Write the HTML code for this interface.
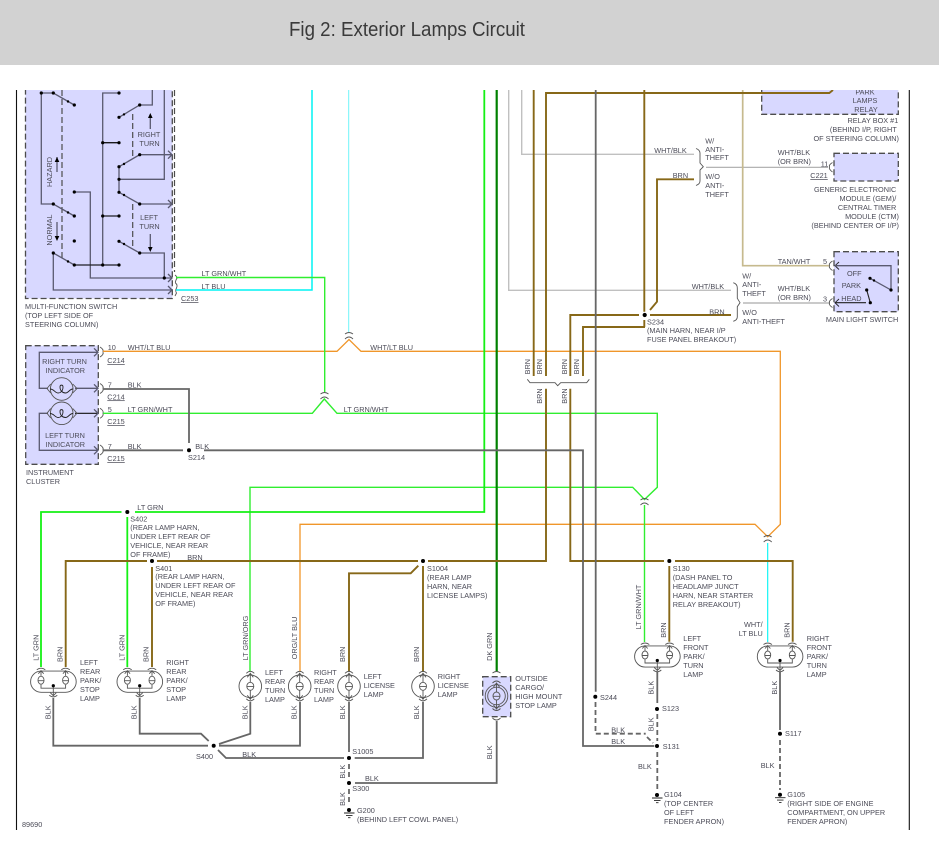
<!DOCTYPE html>
<html><head><meta charset="utf-8"><title>Fig 2: Exterior Lamps Circuit</title>
<style>
html,body{margin:0;padding:0;background:#fff;width:939px;height:854px;overflow:hidden}
svg{position:absolute;left:0;top:0;display:block}
text{font-family:"Liberation Sans",sans-serif;font-size:7.3px;fill:#4c4c58}
.t{font-size:20px;fill:#3a3a3a}
.e{text-anchor:end}.m{text-anchor:middle}.u{text-decoration:underline}
path,line,circle,rect,ellipse{fill:none}
.lg{stroke:#30ee30;stroke-width:1.4}
.bg{stroke:#14f014;stroke-width:1.8}
.dg{stroke:#008000;stroke-width:2.2}
.cy{stroke:#00f4f4;stroke-width:1.5}
.cl{stroke:#70f4f8;stroke-width:1}
.or{stroke:#f0962a;stroke-width:1.3}
.br{stroke:#876818;stroke-width:1.9}
.k{stroke:#666;stroke-width:1.8}
.lgy{stroke:#c0c0c0;stroke-width:1.4}
.gy{stroke:#aaa;stroke-width:1.2}
.tan{stroke:#c6ba8e;stroke-width:1.7}
.d{stroke-dasharray:5 3}
.sw{stroke:#5a5a70;stroke-width:1.3}
.box{fill:#d8d8ff;stroke:#4c4c4c;stroke-width:1.3;stroke-dasharray:6 3}
.dl{stroke:#4c4c4c;stroke-width:1.2;stroke-dasharray:6 3}
.s{stroke:#555;stroke-width:.9}
.dot,.dot circle,.dot path{fill:#000;stroke:none}
</style></head><body>
<svg xmlns="http://www.w3.org/2000/svg" width="939" height="854" viewBox="0 0 939 854">
<defs>
<g id="rl" class="s">
<circle r="11.3"/>
<path d="M-4,-13 Q0,-17 4,-13M-3,-9L0,-13L3,-9M0,-13V-4M-3.4,0.3H3.4M0,4V13M-3,9L0,13L3,9M-4,12.5Q0,16.5 4,12.5"/>
<ellipse rx="3.5" ry="4"/>
</g>
<g id="cp" class="s">
<rect x="-22.7" y="-10.6" width="45.6" height="21.2" rx="10.6"/>
<path d="M-16.5,-12Q-12.3,-15 -8,-12M8,-12Q12.3,-15 16.5,-12M-15,-8L-12.3,-11L-9.6,-8M9.6,-8L12.3,-11L15,-8M-12.3,-11V-6M12.3,-11V-6M-15,-1H-9.5M9.5,-1H15M-12.3,3V6.5H12.3V3M0,4V14M-3,11L0,14L3,11M-4,13.5Q0,17 4,13.5"/>
<ellipse cx="-12.3" cy="-1.5" rx="3" ry="4"/><ellipse cx="12.3" cy="-1.5" rx="3" ry="4"/>
<circle class="dot" cy="4" r="1.6"/>
</g>
<path id="ar" class="sw" d="M-4,-4L0,0L-4,4"/>
<path id="cn" class="s" d="M-4,-2Q0,-5 4,-2M-4,3Q0,-1 4,3" transform="translate(0,1)"/>
<path id="rb" class="s" d="M0,-5Q4,-2.5 3,0Q4,2.5 0,5"/>
<g id="gnd" class="s"><path d="M-5,3H5.5M-3,5.4H3.5M-1,7.7H1.5" style="stroke:#222"/><circle class="dot" r="2"/></g>
</defs>

<!-- outer frame -->
<path d="M16.5,90V830M909.3,90V830" stroke="#111" stroke-width="1.1"/>

<!-- boxes -->
<rect class="box" x="25.5" y="85" width="146.8" height="213.5"/>
<rect class="box" x="761.7" y="85" width="136.6" height="29.3"/>
<rect class="box" x="834" y="153.3" width="64.3" height="27.7"/>
<rect class="box" x="834" y="251.7" width="64.3" height="60"/>
<rect class="box" x="25.7" y="345.7" width="72.6" height="118.6"/>
<rect class="box" x="482.7" y="676.7" width="28" height="40"/>
<path class="dl" d="M174.5,90V272M62,90V258M132.7,114V156M132.7,204V247"/>

<!-- switch wiring -->
<g class="sw">
<path d="M41.3,93V204H53.3L74.3,216M41.3,93H53.3L74.3,105"/>
<path d="M74.3,192H90.3V278H172M53.3,253L74.3,265H119M53.3,253V290H172"/>
<path d="M119,93H102.7V265M102.7,142.7H119M102.7,216H119" />
<path d="M119,117.3L139.7,105H152.3V90M119,166.7L139.7,154.7H172M119,166.7V192.3L139.7,204H172M119,179.3H164.3V90M119,241.3L139.7,253H164.3V278"/>
<path d="M150.3,129V118M150.3,234V247M57,172V157M57,222V236"/>
</g>
<path d="M102.7,142.7H119M102.7,216H119M74.3,265H119" stroke="#111" stroke-width="1.1"/>
<g class="dot">
<circle cx="41.3" cy="93" r="1.6"/><circle cx="53.3" cy="93" r="1.6"/><circle cx="74.3" cy="105" r="1.6"/><circle cx="53.3" cy="204" r="1.6"/><circle cx="74.3" cy="216" r="1.6"/><circle cx="74.3" cy="192" r="1.6"/><circle cx="74.3" cy="241" r="1.6"/><circle cx="53.3" cy="253" r="1.6"/><circle cx="74.3" cy="265" r="1.6"/><circle cx="102.7" cy="265" r="1.6"/><circle cx="119" cy="265" r="1.6"/><circle cx="119" cy="93" r="1.6"/><circle cx="102.7" cy="142.7" r="1.6"/><circle cx="119" cy="142.7" r="1.6"/><circle cx="102.7" cy="216" r="1.6"/><circle cx="119" cy="216" r="1.6"/><circle cx="119" cy="117.3" r="1.6"/><circle cx="139.7" cy="105" r="1.6"/><circle cx="119" cy="166.7" r="1.6"/><circle cx="139.7" cy="154.7" r="1.6"/><circle cx="119" cy="179.3" r="1.6"/><circle cx="119" cy="192.3" r="1.6"/><circle cx="139.7" cy="204" r="1.6"/><circle cx="119" cy="241.3" r="1.6"/><circle cx="139.7" cy="253" r="1.6"/><circle cx="164.3" cy="278" r="1.6"/>
<path d="M150.3,113l-2.3,5h4.6zM150.3,252l-2.3,-5h4.6zM57,157l-2.3,5h4.6zM57,241l-2.3,-5h4.6z"/>
<circle cx="124" cy="114.4" r="1.2"/><circle cx="124" cy="164" r="1.2"/><circle cx="124" cy="195" r="1.2"/><circle cx="124" cy="244" r="1.2"/><circle cx="68" cy="101.5" r="1.2"/><circle cx="68" cy="212.5" r="1.2"/><circle cx="68" cy="261.5" r="1.2"/>
</g>
<use href="#ar" x="172" y="154.7"/><use href="#ar" x="172" y="204"/><use href="#ar" x="172" y="278"/><use href="#ar" x="172" y="290"/>
<path class="s" d="M175,275Q178,277.5 176.5,279Q175,282 175.5,283Q178,285 176.5,288Q175,291 176.5,293L175,296"/>

<!-- instrument cluster wiring -->
<path class="sw" d="M97,352.3H39.3V388.3H48M75,388.3H97M48,413.3H39.3V450.3H97"/>
<path d="M75,413.3H97" stroke="#111" stroke-width="1.1"/>
<g class="s">
<circle cx="61.7" cy="389" r="11.3"/><circle cx="61.7" cy="413.3" r="11.3"/>
<path d="M50.7,384L47,388.5L50.7,393M72.7,384L77,388.5L72.7,393M50.7,408.5L47,413.3L50.7,418M72.7,408.5L77,413.3L72.7,418"/>
<path d="M50,389C54,389 55,393 58,393C60.5,393 63,391 63,387C63,384.5 60,384.5 60,387C60,391 63,393 65.5,393C68.5,393 69.5,389 73,389" style="stroke:#222"/>
<path d="M50,413.5C54,413.5 55,417.5 58,417.5C60.5,417.5 63,415.5 63,411.5C63,409 60,409 60,411.5C60,415.5 63,417.5 65.5,417.5C68.5,417.5 69.5,413.5 73,413.5" style="stroke:#222"/>
</g>
<use href="#ar" x="98" y="352.3"/><use href="#ar" x="98" y="388.3"/><use href="#ar" x="98" y="413.3"/><use href="#ar" x="98" y="450.3"/>
<use href="#rb" x="100" y="352"/><use href="#rb" x="100" y="388.5"/><use href="#rb" x="100" y="413.3"/><use href="#rb" x="100" y="450"/>

<!-- light greys / tan -->
<path class="lgy" d="M521.7,90V154.3H694M508.7,90V290.3H731"/>
<path class="gy" d="M706,167.3H828M743,303H829"/>
<path class="tan" d="M742.7,90V265.7H829"/>

<!-- cyan -->
<path class="cy" d="M312,90V290H176"/>
<path class="cl" d="M348.7,90V332"/>
<path class="cy" style="stroke-width:1.1" d="M767.7,543V642"/>

<!-- orange -->
<path class="or" d="M103,351.3H337L349,339.5L361,351.3H780.3V524.3L767.7,536.7L755,524.3H300V671.7"/>

<!-- light green -->
<path class="lg" d="M176,277.5H324.7V392"/>
<path class="lg" d="M103,413.3H312.3L324.3,399L337,413.3H657.3V487.3L644.5,499.5L632.7,487.3H250V671.7"/>
<path class="lg" d="M644.5,505V642"/>
<path class="bg" d="M484.3,90V512H135M121.5,512H41V667M127.3,517V667"/>
<path class="dg" d="M496.7,90V671.7"/>

<!-- browns -->
<g class="br">
<path d="M533.7,90V376M546,376V93H829.3L833,90"/>
<path d="M644.3,90V311.7M570.3,376V315H639M583,376V327H645M644.3,320V327M650,315H731M650,310L657,301.7V179.3H694"/>
<path d="M546,388.7V561H428M418,561H157M147,561H65.7V667M152,567V667M423,566V672M418.3,565.7L410.7,573.3H349V671.7"/>
<path d="M570.3,388.7V561H664M675,561H792.7V641.7M669.3,566V641.7"/>
</g>

<!-- blacks -->
<g class="k">
<path d="M595.7,90V691.7"/>
<path d="M103,389H189V443M103,450.3H183M204,450.3H583V746H654.3"/>
<path class="d" d="M595.5,702V733.7H645.7M647,737L653,743"/>
<path d="M53.3,698V745.7H208M139.7,698V733.7H201L208.7,741M219,744L250.3,733.7V701.7M219,745.7H300V701.7M218,750L226,758H344M354.7,758H423V701.7M349,701.7V752"/>
<path class="d" d="M349,764V778M349,789V804"/>
<path d="M355,783H496.7V721"/>
<path d="M657.3,671.7V703M780,671.7V730"/>
<path class="d" d="M657.3,714V741M657.3,752V790M780,740V790"/>
</g>

<!-- crossing connectors -->
<use href="#cn" x="349" y="335"/><use href="#cn" x="324.5" y="395"/><use href="#cn" x="644.5" y="501"/><use href="#cn" x="767.7" y="538"/>

<!-- lamps -->
<use href="#cp" x="53.3" y="681.7"/><use href="#cp" x="139.7" y="681.7"/>
<use href="#cp" x="657.3" y="656.5"/><use href="#cp" x="780" y="656.5"/>
<use href="#rl" x="250.3" y="686.3"/><use href="#rl" x="299.7" y="686.3"/><use href="#rl" x="349" y="686.3"/><use href="#rl" x="423" y="686.3"/>
<use href="#rl" x="496.5" y="696"/>
<circle class="s" cx="496.5" cy="696" r="8.8"/>
<path class="s" d="M492.5,673Q496.5,670 500.5,673M492.5,718Q496.5,722 500.5,718"/>

<!-- splice dots -->
<g class="dot">
<circle cx="127.3" cy="512" r="2"/><circle cx="152" cy="561" r="2"/><circle cx="423" cy="561" r="2"/><circle cx="669.3" cy="561" r="2"/><circle cx="644.7" cy="315" r="2.1"/><circle cx="189" cy="450.3" r="2"/><circle cx="213.7" cy="745.7" r="2"/><circle cx="349" cy="758" r="2"/><circle cx="349" cy="783" r="2"/><circle cx="595.3" cy="696.7" r="2"/><circle cx="657" cy="709" r="2"/><circle cx="657" cy="746" r="2"/><circle cx="780" cy="733.7" r="2"/>
</g>
<use href="#gnd" x="349" y="810"/><use href="#gnd" x="657" y="795"/><use href="#gnd" x="780" y="794.7"/>

<!-- braces -->
<path class="s" d="M527.3,379.3L530,382.7H555L557.7,385.7L560.7,382.7H586.7L589.3,379.3"/>
<path class="s" d="M696,148.5Q700,150 700,153V163L703.3,166.7L700,170V181Q700,184 696,185.5"/>
<path class="s" d="M733.3,282.7Q737.3,284 737.3,288V298.3L740,302.7L737.3,306.7V317Q737.3,320 733.3,321.3"/>
<!-- right connectors -->
<path class="s" d="M832.5,162.5Q828.5,165 829.5,167Q828.5,169 832.5,172"/>
<path class="s" d="M832.5,261Q828.5,263.5 829.5,265.7Q828.5,268 832.5,270.5M832.5,298.5Q828.5,301 829.5,303Q828.5,305 832.5,307.5"/>
<path class="s" d="M839,262L835,265.7L839,269.5M839,299L835,302.7L839,306.5" style="stroke:#222"/>
<!-- main light switch -->
<path class="sw" d="M835,265.7H891V290L870,278.3"/>
<path d="M866.7,290L870.3,302.7M835,302.7H866" stroke="#222" stroke-width="1.1"/>
<g class="dot"><circle cx="891" cy="290" r="1.6"/><circle cx="870" cy="278.3" r="1.6"/><circle cx="866.7" cy="290" r="1.6"/><circle cx="870.3" cy="302.7" r="1.6"/><circle cx="874" cy="280.5" r="1.2"/></g>

<!-- cover above diagram -->
<text class="m" x="808" y="90">BRN</text>
<text class="m" x="865" y="94.3">PARK</text>
<rect x="0" y="65" width="939" height="25" style="fill:#fff"/>
<rect x="0" y="0" width="939" height="65" style="fill:#d2d2d2"/>
<text class="t" x="289" y="36" textLength="236" lengthAdjust="spacingAndGlyphs">Fig 2: Exterior Lamps Circuit</text>

<!-- labels: multifunction -->
<text class="m" x="149" y="137">RIGHT</text><text class="m" x="149.5" y="146">TURN</text>
<text class="m" x="149" y="220">LEFT</text><text class="m" x="149.5" y="229">TURN</text>
<text transform="translate(52,172) rotate(-90)" class="m">HAZARD</text>
<text transform="translate(52,230) rotate(-90)" class="m">NORMAL</text>
<text x="25" y="309">MULTI-FUNCTION SWITCH</text><text x="25" y="318">(TOP LEFT SIDE OF</text><text x="25" y="327">STEERING COLUMN)</text>
<text x="201.5" y="276">LT GRN/WHT</text><text x="201.5" y="289">LT BLU</text><text class="u" x="181" y="301">C253</text>

<!-- upper right -->
<text class="m" x="865" y="103">LAMPS</text><text class="m" x="866" y="112">RELAY</text>
<text class="e" x="898.3" y="123">RELAY BOX #1</text><text class="e" x="896.7" y="132">(BEHIND I/P, RIGHT</text><text class="e" x="899" y="141">OF STEERING COLUMN)</text>
<text x="705.3" y="143.3">W/</text><text x="705.3" y="152">ANTI-</text><text x="705.3" y="160">THEFT</text>
<text x="654.3" y="153">WHT/BLK</text><text x="672.7" y="178">BRN</text>
<text x="705.3" y="179">W/O</text><text x="705.3" y="188">ANTI-</text><text x="705.3" y="197">THEFT</text>
<text x="777.7" y="155">WHT/BLK</text><text x="777.7" y="164">(OR BRN)</text>
<text x="820.7" y="166.3">11</text><text class="u" x="810.3" y="178">C221</text>
<text class="e" x="896.3" y="192">GENERIC ELECTRONIC</text><text class="e" x="896.3" y="201">MODULE (GEM)/</text><text class="e" x="896.3" y="210">CENTRAL TIMER</text><text class="e" x="899" y="219">MODULE (CTM)</text><text class="e" x="899" y="228">(BEHIND CENTER OF I/P)</text>
<text x="777.7" y="264">TAN/WHT</text><text x="823" y="264">5</text>
<text x="847" y="276">OFF</text><text x="841.7" y="288">PARK</text><text x="841.3" y="301">HEAD</text><text x="823" y="301.3">3</text>
<text x="777.7" y="291">WHT/BLK</text><text x="777.7" y="300">(OR BRN)</text>
<text x="742.3" y="278.3">W/</text><text x="742.3" y="287">ANTI-</text><text x="742.3" y="296">THEFT</text><text x="742.3" y="315">W/O</text><text x="742.3" y="324">ANTI-THEFT</text>
<text x="691.7" y="289">WHT/BLK</text><text x="709.3" y="314.3">BRN</text>
<text x="647" y="324.3">S234</text><text x="647" y="333">(MAIN HARN, NEAR I/P</text><text x="647" y="342">FUSE PANEL BREAKOUT)</text>
<text class="e" x="898.3" y="322">MAIN LIGHT SWITCH</text>
<text class="m" transform="translate(530,366.7) rotate(-90)">BRN</text>
<text class="m" transform="translate(542,366.7) rotate(-90)">BRN</text>
<text class="m" transform="translate(567,366.7) rotate(-90)">BRN</text>
<text class="m" transform="translate(579,366.7) rotate(-90)">BRN</text>
<text class="m" transform="translate(542,396) rotate(-90)">BRN</text>
<text class="m" transform="translate(567,396) rotate(-90)">BRN</text>

<!-- cluster labels -->
<text x="107.7" y="350">10</text><text x="127.7" y="350">WHT/LT BLU</text><text x="370.3" y="350">WHT/LT BLU</text><text class="u" x="107.3" y="363">C214</text>
<text x="107.7" y="387.3">7</text><text x="127.7" y="387.3">BLK</text><text class="u" x="107.3" y="399.3">C214</text>
<text x="107.7" y="412">5</text><text x="127.7" y="412">LT GRN/WHT</text><text x="343.7" y="412">LT GRN/WHT</text><text class="u" x="107.3" y="424">C215</text>
<text x="107.7" y="449">7</text><text x="127.7" y="449">BLK</text><text class="u" x="107.3" y="461">C215</text>
<text x="195.3" y="449">BLK</text><text x="188" y="460">S214</text>
<text class="m" x="64.5" y="364">RIGHT TURN</text><text class="m" x="65.3" y="373">INDICATOR</text><text class="m" x="65" y="438">LEFT TURN</text><text class="m" x="65.3" y="447">INDICATOR</text>
<text x="26" y="475">INSTRUMENT</text><text x="26" y="484">CLUSTER</text>

<!-- middle -->
<text x="137.3" y="510">LT GRN</text>
<text x="130.3" y="521.3">S402</text><text x="130.3" y="530">(REAR LAMP HARN,</text><text x="130.3" y="539">UNDER LEFT REAR OF</text><text x="130.3" y="548">VEHICLE, NEAR REAR</text><text x="130.3" y="557">OF FRAME)</text>
<text x="187.3" y="560">BRN</text>
<text x="155.3" y="571">S401</text><text x="155.3" y="579">(REAR LAMP HARN,</text><text x="155.3" y="588">UNDER LEFT REAR OF</text><text x="155.3" y="597">VEHICLE, NEAR REAR</text><text x="155.3" y="606">OF FRAME)</text>
<text x="427" y="571">S1004</text><text x="427" y="580">(REAR LAMP</text><text x="427" y="589">HARN, NEAR</text><text x="427" y="598">LICENSE LAMPS)</text>
<text x="672.7" y="571">S130</text><text x="672.7" y="580">(DASH PANEL TO</text><text x="672.7" y="589">HEADLAMP JUNCT</text><text x="672.7" y="598">HARN, NEAR STARTER</text><text x="672.7" y="607">RELAY BREAKOUT)</text>

<!-- rotated wire labels -->
<text class="m" transform="translate(641,607) rotate(-90)">LT GRN/WHT</text>
<text class="m" transform="translate(666,630) rotate(-90)">BRN</text>
<text class="m" transform="translate(789.4,630) rotate(-90)">BRN</text>
<text class="m" transform="translate(492,646.7) rotate(-90)">DK GRN</text>
<text class="m" transform="translate(492,752.3) rotate(-90)">BLK</text>
<text class="m" transform="translate(653.4,687.7) rotate(-90)">BLK</text>
<text class="m" transform="translate(653.4,724.3) rotate(-90)">BLK</text>
<text class="m" transform="translate(777,687.7) rotate(-90)">BLK</text>
<text class="m" transform="translate(38.7,647.7) rotate(-90)">LT GRN</text>
<text class="m" transform="translate(62.4,654.3) rotate(-90)">BRN</text>
<text class="m" transform="translate(124.7,647.7) rotate(-90)">LT GRN</text>
<text class="m" transform="translate(148.4,654.3) rotate(-90)">BRN</text>
<text class="m" transform="translate(50.4,712.3) rotate(-90)">BLK</text>
<text class="m" transform="translate(136.4,712.3) rotate(-90)">BLK</text>
<text class="m" transform="translate(248,638) rotate(-90)">LT GRN/ORG</text>
<text class="m" transform="translate(297,638) rotate(-90)">ORG/LT BLU</text>
<text class="m" transform="translate(345,654.3) rotate(-90)">BRN</text>
<text class="m" transform="translate(419,654.3) rotate(-90)">BRN</text>
<text class="m" transform="translate(247.7,712.3) rotate(-90)">BLK</text>
<text class="m" transform="translate(296.4,712.3) rotate(-90)">BLK</text>
<text class="m" transform="translate(345,712.3) rotate(-90)">BLK</text>
<text class="m" transform="translate(419,712.3) rotate(-90)">BLK</text>
<text class="m" transform="translate(345,771.7) rotate(-90)">BLK</text>
<text class="m" transform="translate(345,799) rotate(-90)">BLK</text>

<!-- lamp labels -->
<text x="80" y="665">LEFT</text><text x="80" y="674">REAR</text><text x="80" y="683">PARK/</text><text x="80" y="692">STOP</text><text x="80" y="701">LAMP</text>
<text x="166.3" y="665">RIGHT</text><text x="166.3" y="674">REAR</text><text x="166.3" y="683">PARK/</text><text x="166.3" y="692">STOP</text><text x="166.3" y="701">LAMP</text>
<text x="265" y="675">LEFT</text><text x="265" y="684">REAR</text><text x="265" y="693">TURN</text><text x="265" y="702">LAMP</text>
<text x="314" y="675">RIGHT</text><text x="314" y="684">REAR</text><text x="314" y="693">TURN</text><text x="314" y="702">LAMP</text>
<text x="363.7" y="679">LEFT</text><text x="363.7" y="688">LICENSE</text><text x="363.7" y="697">LAMP</text>
<text x="437.7" y="679">RIGHT</text><text x="437.7" y="688">LICENSE</text><text x="437.7" y="697">LAMP</text>
<text x="515.3" y="681">OUTSIDE</text><text x="515.3" y="690">CARGO/</text><text x="515.3" y="699">HIGH MOUNT</text><text x="515.3" y="708">STOP LAMP</text>
<text x="683.3" y="641">LEFT</text><text x="683.3" y="650">FRONT</text><text x="683.3" y="659">PARK/</text><text x="683.3" y="668">TURN</text><text x="683.3" y="677">LAMP</text>
<text x="806.7" y="641">RIGHT</text><text x="806.7" y="650">FRONT</text><text x="806.7" y="659">PARK/</text><text x="806.7" y="668">TURN</text><text x="806.7" y="677">LAMP</text>
<text x="744" y="627">WHT/</text><text x="738.7" y="636">LT BLU</text>

<!-- bottom labels -->
<text x="196" y="759">S400</text><text x="242.3" y="757">BLK</text><text x="352.3" y="754">S1005</text><text x="365" y="781">BLK</text><text x="352.3" y="791">S300</text>
<text x="357" y="813">G200</text><text x="357" y="822">(BEHIND LEFT COWL PANEL)</text>
<text x="22" y="827">89690</text>
<text x="600" y="700">S244</text><text x="662" y="711">S123</text><text x="611.3" y="732.3">BLK</text><text x="611.3" y="744">BLK</text><text x="662.7" y="749">S131</text><text x="638" y="769">BLK</text>
<text x="664" y="797">G104</text><text x="664" y="806">(TOP CENTER</text><text x="664" y="815">OF LEFT</text><text x="664" y="824">FENDER APRON)</text>
<text x="785" y="736">S117</text><text x="760.7" y="768">BLK</text>
<text x="787.3" y="797">G105</text><text x="787.3" y="806">(RIGHT SIDE OF ENGINE</text><text x="787.3" y="815">COMPARTMENT, ON UPPER</text><text x="787.3" y="824">FENDER APRON)</text>
</svg>
</body></html>
